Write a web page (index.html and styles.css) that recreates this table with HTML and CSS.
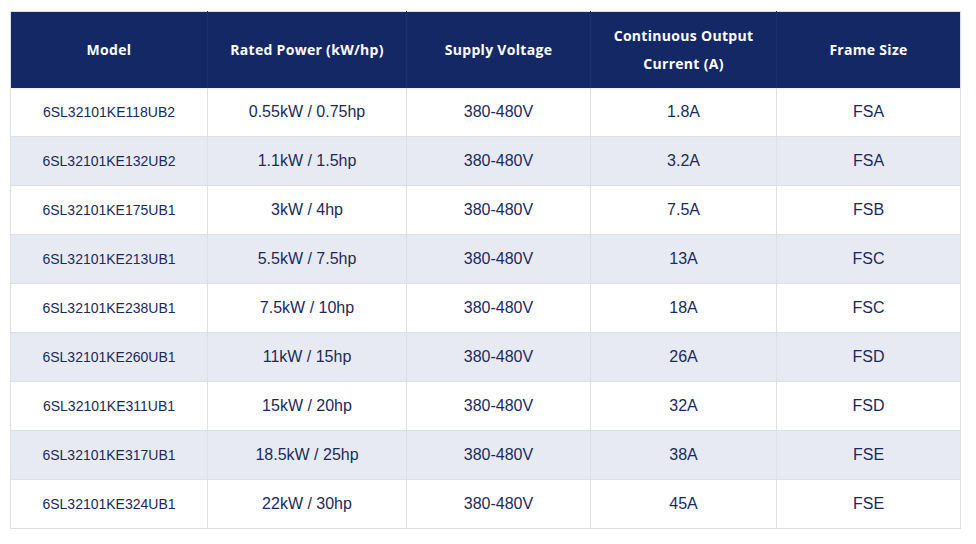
FILE: index.html
```html
<!DOCTYPE html>
<html lang="en">
<head>
<meta charset="utf-8">
<title>Drive Specifications</title>
<link rel="stylesheet" href="styles.css">
</head>
<body>
<div class="wrap">
<table class="spec">
<colgroup>
<col class="c1"><col class="c2"><col class="c3"><col class="c4"><col class="c5">
</colgroup>
<thead>
<tr>
<th>Model</th>
<th>Rated Power (kW/hp)</th>
<th>Supply Voltage</th>
<th>Continuous Output<br>Current (A)</th>
<th>Frame Size</th>
</tr>
</thead>
<tbody>
<tr><td class="model">6SL32101KE118UB2</td><td>0.55kW / 0.75hp</td><td>380-480V</td><td>1.8A</td><td>FSA</td></tr>
<tr><td class="model">6SL32101KE132UB2</td><td>1.1kW / 1.5hp</td><td>380-480V</td><td>3.2A</td><td>FSA</td></tr>
<tr><td class="model">6SL32101KE175UB1</td><td>3kW / 4hp</td><td>380-480V</td><td>7.5A</td><td>FSB</td></tr>
<tr><td class="model">6SL32101KE213UB1</td><td>5.5kW / 7.5hp</td><td>380-480V</td><td>13A</td><td>FSC</td></tr>
<tr><td class="model">6SL32101KE238UB1</td><td>7.5kW / 10hp</td><td>380-480V</td><td>18A</td><td>FSC</td></tr>
<tr><td class="model">6SL32101KE260UB1</td><td>11kW / 15hp</td><td>380-480V</td><td>26A</td><td>FSD</td></tr>
<tr><td class="model">6SL32101KE311UB1</td><td>15kW / 20hp</td><td>380-480V</td><td>32A</td><td>FSD</td></tr>
<tr><td class="model">6SL32101KE317UB1</td><td>18.5kW / 25hp</td><td>380-480V</td><td>38A</td><td>FSE</td></tr>
<tr><td class="model">6SL32101KE324UB1</td><td>22kW / 30hp</td><td>380-480V</td><td>45A</td><td>FSE</td></tr>
</tbody>
</table>
</div>
</body>
</html>
```
FILE: styles.css
```css
html, body {
  margin: 0;
  padding: 0;
  background: #ffffff;
}
.wrap {
  padding: 11px 0 0 10px;
}
.spec {
  border-collapse: collapse;
  table-layout: fixed;
  width: 950px;
  border: 1px solid #dcdfe5;
}
.c1 { width: 197px; }
.c2 { width: 199px; }
.c3 { width: 184px; }
.c4 { width: 186px; }
.c5 { width: 184px; }
.spec th {
  background: #152866;
  color: #ffffff;
  font-family: "Open Sans", "Noto Sans", sans-serif;
  font-weight: 700;
  font-size: 14px;
  letter-spacing: 0.3px;
  line-height: 28px;
  padding: 10px 8px;
  height: 56px;
  text-align: center;
  vertical-align: middle;
  border-left: 1px solid #1d2f6b;
  box-shadow: 0 1px 2px rgba(0,0,0,0.08);
}
.spec th:first-child { border-left: none; }
.spec td {
  font-family: "Liberation Sans", Arial, sans-serif;
  font-size: 16px;
  color: #1b2a5c;
  text-align: center;
  vertical-align: middle;
  height: 48px;
  padding: 0 6px;
  border: 1px solid #dcdfe5;
  border-top: none;
}
.spec td.model { font-size: 14px; }
.spec tbody tr:nth-child(even) td { background: #e7eaf2; }
```
